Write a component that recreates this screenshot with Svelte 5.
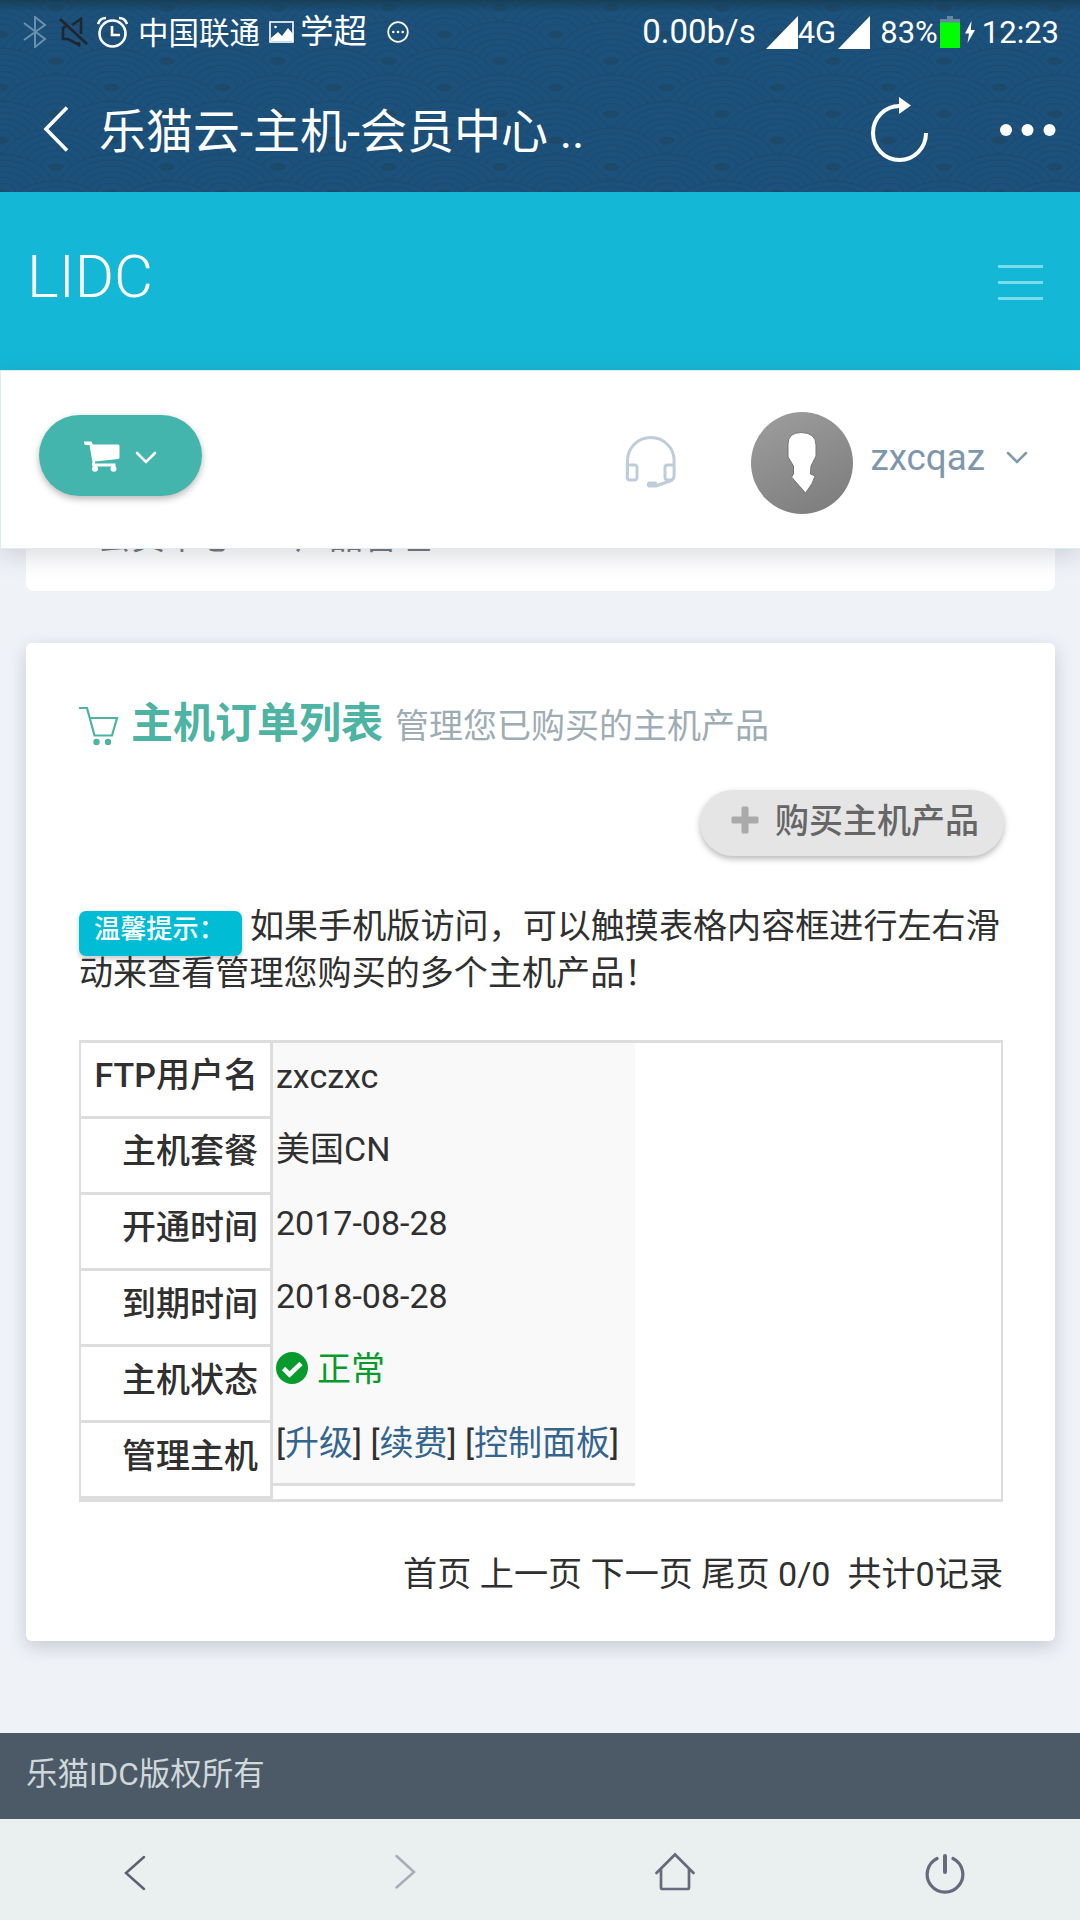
<script>
  const rows = [
    { label: 'FTP用户名', value: 'zxczxc', kind: 'text' },
    { label: '主机套餐', value: '美国CN', kind: 'text' },
    { label: '开通时间', value: '2017-08-28', kind: 'text' },
    { label: '到期时间', value: '2018-08-28', kind: 'text' },
    { label: '主机状态', value: '正常', kind: 'status' },
    { label: '管理主机', links: ['升级', '续费', '控制面板'], kind: 'links' }
  ];
  // Radii of the concentric arcs in one wave fan
  const rings = [48, 40, 32, 24, 16];
  // Fan centres inside one tile, back to front
  const fans = [
    [0, 10], [111, 10], [55.5, 36.5], [0, 63], [111, 63], [55.5, 89.5], [0, 116], [111, 116]
  ];
</script>

<div class="screen">
  <header class="top">
    <svg class="waves" width="1080" height="192" aria-hidden="true">
      <defs>
        <pattern id="waves" width="111" height="53" patternUnits="userSpaceOnUse" x="56" y="-1">
          {#each fans as [x, y]}
            <ellipse cx={x} cy={y} rx="56" ry="40" fill="#1c517b" stroke="#1b4b72" stroke-width="1.4" />
            {#each rings as r}
              <ellipse cx={x} cy={y} rx={r} ry={r * 0.72} fill="none" stroke="#1b4c73" stroke-width="1.6" />
            {/each}
            <ellipse cx={x} cy={y - 1} rx="8" ry="4" fill="#1d4a6b" />
          {/each}
        </pattern>
        <linearGradient id="shade" x1="0" y1="0" x2="0" y2="1">
          <stop offset="0" stop-color="#163a50" stop-opacity=".8" />
          <stop offset=".06" stop-color="#163a50" stop-opacity="0" />
        </linearGradient>
      </defs>
      <rect width="1080" height="192" fill="url(#waves)" />
      <rect width="1080" height="192" fill="url(#shade)" />
    </svg>

    <div class="status">
      <svg class="bt" width="24" height="32" viewBox="0 0 24 32"><path d="M1 7l21 16-10 8V1l10 8L1 24" fill="none" stroke="#6a90ae" stroke-width="2" /></svg>
      <svg class="mute" width="29" height="30" viewBox="0 0 29 30"><path d="M1 2l27 25M13 8l9-6v15M4 10v12h5l11 6v-3M4 10h3" fill="none" stroke="#20262b" stroke-width="2.6" /></svg>
      <svg class="alarm" width="31" height="32" viewBox="0 0 31 32"><g fill="none" stroke="#fff" stroke-width="2.6"><circle cx="15.500" cy="17.500" r="13" /><path d="M15 10v9h8" /><path d="M1 8q2-6 8-6M22 2q6 0 8 6" /></g></svg>
      <span class="carrier">中国联通</span>
      <svg class="pic" width="25" height="22" viewBox="0 0 25 22"><rect x="1" y="1" width="23" height="20" fill="none" stroke="#fff" stroke-width="1.600" /><path d="M2 20v-3l7-6 4 4 6-8 5 6v7z" fill="#fff" /><circle cx="6.500" cy="6" r="1.300" fill="#fff" /></svg>
      <span class="net">学超</span>
      <svg class="bubble" width="22" height="22" viewBox="0 0 22 22"><circle cx="11" cy="11" r="9.800" fill="none" stroke="#fff" stroke-width="1.700" /><g fill="#fff"><circle cx="6.300" cy="11" r="1.300" /><circle cx="11" cy="11" r="1.300" /><circle cx="15.700" cy="11" r="1.300" /></g></svg>
      <div class="right">
        <span class="speed">0.00b/s</span>
        <svg class="sig1" width="32" height="33" viewBox="0 0 32 33"><path d="M32 0v33H0z" fill="#fff" /></svg>
        <span class="g4">4G</span>
        <svg class="sig2" width="32" height="33" viewBox="0 0 32 33"><path d="M32 0v33H0z" fill="#fff" /></svg>
        <span class="pct">83%</span>
        <svg class="bat" width="20" height="32" viewBox="0 0 20 32"><path d="M7 0h6v3h7v4H0V3h7z" fill="#67869f" /><path d="M0 6.500h20V32H0z" fill="#0f0" /></svg>
        <svg class="bolt" width="10" height="22" viewBox="0 0 10 22"><path d="M6.500 0L0 12.500h4L2.500 22 10 9H5.800z" fill="#fff" /></svg>
        <span class="time">12:23</span>
      </div>
    </div>

    <div class="titlebar">
      <svg class="back" width="26" height="46" viewBox="0 0 26 46"><path d="M24 1.500L3 23l21 21.500" fill="none" stroke="#fff" stroke-width="3.600" /></svg>
      <h1>乐猫云-主机-会员中心 ..</h1>
      <svg class="reload" width="60" height="66" viewBox="0 0 60 66"><path d="M56 36A26.500 27 0 1 1 29.500 9" fill="none" stroke="#fff" stroke-width="4" /><path d="M29 0l12 8.500L29 17z" fill="#fff" /></svg>
      <svg class="dots" width="56" height="12" viewBox="0 0 56 12"><g fill="#fff"><circle cx="6" cy="6" r="6" /><circle cx="27.500" cy="6" r="6" /><circle cx="49.500" cy="6" r="6" /></g></svg>
    </div>
  </header>

  <div class="brandbar">
    <span class="brand">LIDC</span>
    <span class="menu"><i></i><i></i><i></i></span>
  </div>

  <div class="userbar">
    <button class="cart" aria-label="cart">
      <svg width="36" height="31" viewBox="0 0 36 31"><path d="M0 0.500h7.500l1.300 3H34q1.500 0 1.500 1.500v11.500q0 1.300-1.300 1.500L11 20.500v2h20.500v3H9q-2-1-.5-4L5.500 4H1Q-.3 2 0 .5z" fill="#fff" /><circle cx="11" cy="27.800" r="3" fill="#fff" /><circle cx="29.500" cy="27.800" r="3" fill="#fff" /></svg>
      <svg class="chev" width="22" height="14" viewBox="0 0 22 14"><path d="M2 2l9 9 9-9" fill="none" stroke="#fff" stroke-width="2.600" stroke-linecap="round" /></svg>
    </button>
    <svg class="headset" width="52" height="52" viewBox="0 0 52 52"><g fill="none" stroke="#bfcddb" stroke-width="3"><path d="M2.500 38V24.500a23.300 23 0 0 1 46.600 0V39q0 4.500-4 6L31 50h-7q-1.500-1.500 0-3h6.500" stroke-linecap="round" /><path d="M2 29h7.500q2.500 0 2.500 2.500V41q0 3-3 3H5q-2.700 0-2.700-3V28" /><path d="M50 29h-7.500q-2.500 0-2.500 2.500V41q0 3 3 3h4" /></g></svg>
    <svg class="avatar" width="102" height="102" viewBox="0 0 102 102">
      <defs>
        <linearGradient id="av" x1=".2" y1="0" x2=".7" y2="1"><stop offset="0" stop-color="#9c9c9c" /><stop offset="1" stop-color="#7e7e7e" /></linearGradient>
      </defs>
      <circle cx="51" cy="51" r="51" fill="url(#av)" />
      <path d="M37 32q0-11.500 13.500-11.500Q65 21 65 33v11l-5 10-.5 8 4.500 2-3 7.500L54.500 81 40.500 65l2-3v-8L37 45z" fill="#fff" stroke="#757575" stroke-width="1" />
    </svg>
    <span class="user">zxcqaz</span>
    <svg class="caret" width="22" height="14" viewBox="0 0 22 14"><path d="M2 2l9 9 9-9" fill="none" stroke="#7f99ae" stroke-width="2.500" stroke-linecap="round" /></svg>
  </div>

  <main>
    <nav class="crumbs"><span>会员中心</span><span>产品管理</span></nav>

    <section class="card">
      <div class="heading">
        <svg width="40" height="40" viewBox="0 0 40 40"><path d="M0 2h8l7.500 27.500H33L38 12H11" fill="none" stroke="#4db3a2" stroke-width="2.200" /><circle cx="17.500" cy="36" r="3.200" fill="#4db3a2" /><circle cx="29" cy="36" r="3.200" fill="#4db3a2" /></svg>
        <h2>主机订单列表</h2>
        <small>管理您已购买的主机产品</small>
      </div>

      <div class="actions">
        <button class="buy">
          <svg width="28" height="28" viewBox="0 0 28 28"><path d="M12 .5h4q1.500 0 1.500 1.500v8.500H26q1.500 0 1.500 1.500v4q0 1.500-1.500 1.500h-8.500V26q0 1.500-1.500 1.500h-4q-1.500 0-1.500-1.500v-8.500H2Q.5 17.500.5 16v-4q0-1.500 1.500-1.500h8.500V2q0-1.500 1.500-1.500z" fill="#aaa" /></svg>
          <span>购买主机产品</span>
        </button>
      </div>

      <p class="tip"><span class="badge">温馨提示：</span><span class="msg">如果手机版访问，可以触摸表格内容框进行左右滑动来查看管理您购买的多个主机产品！</span></p>

      <div class="table">
        <div class="keys">
          {#each rows as row}
            <div class="key">{row.label}</div>
          {/each}
        </div>
        <div class="vals">
          {#each rows as row}
            <div class="val">
              {#if row.kind === 'status'}
                <span class="ok"><svg width="32" height="32" viewBox="0 0 32 32"><circle cx="16" cy="16" r="16" fill="#089a2d" /><path d="M7.500 16.500l6 6L25 11.500" fill="none" stroke="#f9f9f9" stroke-width="4.600" /></svg>{row.value}</span>
              {:else if row.kind === 'links'}
                {#each row.links as link}<span class="link">[<a href="#top">{link}</a>]</span>{/each}
              {:else}
                {row.value}
              {/if}
            </div>
          {/each}
        </div>
      </div>

      <div class="pager">首页 上一页 下一页 尾页 0/0&nbsp; 共计0记录</div>
    </section>
  </main>

  <footer>乐猫IDC版权所有</footer>

  <nav class="bottom">
    <span><svg width="40" height="40" viewBox="0 0 40 40"><path d="M29 5L11 21l18 16" fill="none" stroke="#5d6073" stroke-width="2.500" stroke-linecap="round" /></svg></span>
    <span><svg width="40" height="40" viewBox="0 0 40 40"><path d="M11.500 4L29 20l-17.500 15.500" fill="none" stroke="#a9abb6" stroke-width="2.500" stroke-linecap="round" /></svg></span>
    <span><svg width="40" height="40" viewBox="0 0 40 40"><path d="M1.500 21L20 2.500 38.500 21M6 17.500v18q0 1.500 1.500 1.500h25q1.500 0 1.500-1.500v-18" fill="none" stroke="#656a7d" stroke-width="2.700" stroke-linecap="round" /></svg></span>
    <span><svg class="power" width="40" height="42" viewBox="0 0 40 42"><path d="M12 6.500a17.800 17.800 0 1 0 16 0" fill="none" stroke="#656a7d" stroke-width="3.200" stroke-linecap="round" /><path d="M20 4v16" stroke="#656a7d" stroke-width="4" stroke-linecap="round" /></svg></span>
  </nav>
</div>

<style>
  :global(body) { background: #eff2f7; }
  .screen {
    width: 1080px;
    height: 1920px;
    display: flex;
    flex-direction: column;
    overflow: hidden;
    background: #eff2f7;
    color: #303030;
    font-family: Roboto, "Noto Sans CJK SC", sans-serif;
    font-size: 34px;
  }
  svg { display: block; flex: none; }
  h1, h2, p { margin: 0; font-weight: 400; }
  button { border: 0; padding: 0; font: inherit; display: flex; align-items: center; }

  .top { position: relative; height: 192px; flex: none; color: #fff; background: #1c517b; }
  .waves { position: absolute; top: 0; left: 0; }
  .status { position: relative; height: 64px; display: flex; align-items: center; padding: 0 21px 0 23px; white-space: nowrap; }
  .mute { margin-left: 12px; }
  .alarm { margin-left: 9px; }
  .carrier { margin: 0 0 2px 10px; font-size: 30.500px; }
  .pic { margin-left: 9px; }
  .net { margin: 0 0 7px 6px; font-size: 33.500px; }
  .bubble { margin-left: 20px; }
  .right { flex: 1; display: flex; align-items: center; justify-content: flex-end; font-size: 31px; }
  .speed { font-size: 33px; margin: 0 10px 2px 0; }
  .g4 { margin-right: 2px; }
  .sig2 { margin-right: 10px; }
  .pct { margin-right: 2px; }
  .bolt { margin: 0 7px 0 5px; }
  .titlebar { position: relative; height: 128px; display: flex; align-items: center; padding: 0 24px 0 43px; }
  .back { margin-top: 2px; }
  .titlebar h1 { flex: 1; margin-left: 30px; font-size: 47px; line-height: 60px; padding-top: 7px; }
  .reload { margin: 4px 70px 0 0; }
  .dots { margin-top: 3px; }

  .brandbar { height: 178px; flex: none; background: #14b8d6; display: flex; align-items: center; justify-content: space-between; padding: 0 37px 0 27px; }
  .brand { font-size: 60px; font-weight: 300; line-height: 70px; padding-bottom: 9px; color: #fff; }
  .menu { display: flex; flex-direction: column; gap: 13px; padding-top: 3px; }
  .menu i { width: 45px; height: 3px; background: #75deed; }

  .userbar {
    position: relative;
    z-index: 2;
    box-sizing: border-box;
    height: 179px;
    flex: none;
    display: flex;
    align-items: center;
    padding: 0 52px 7px 38px;
    background: #fff;
    border: solid #d9eeee;
    border-width: 1px 0 1px 1px;
    box-shadow: 0 6px 24px rgba(60, 70, 90, .2);
  }
  .cart { width: 163px; height: 81px; border-radius: 41px; padding-left: 45px; margin-right: auto; margin-bottom: 2px; background: #43b5ad; box-shadow: 0 3px 7px rgba(0, 0, 0, .28); }
  .cart svg { margin-top: 3px; }
  .cart .chev { margin: 5px 0 0 15px; }
  .headset { margin: 12px 74px 0 0; }
  .avatar { margin: 14px 17px 0 0; }
  .user { font-size: 36.800px; line-height: 44px; margin-right: 21px; color: #7f97ac; padding-top: 4px; }
  .caret { margin-top: 4px; }

  main { flex: 1; padding: 0 25px 0 26px; }
  .crumbs { height: 42px; overflow: hidden; display: flex; gap: 62px; padding-left: 71px; border-radius: 0 0 8px 8px; background: #fff; color: #777; line-height: 40px; }
  .crumbs span { margin-top: -32px; height: 40px; }

  .card { box-sizing: border-box; height: 998px; margin-top: 52px; padding: 56px 52px 0 53px; border-radius: 6px; background: #fff; box-shadow: 0 6px 18px rgba(70, 80, 100, .24); }
  .heading { height: 50px; display: flex; align-items: center; white-space: nowrap; }
  .heading svg { margin-top: 4px; }
  h2 { margin: 0 12px 0 12px; font-size: 42px; line-height: 50px; font-weight: 700; color: #4db3a2; }
  small { font-size: 34px; line-height: 50px; color: #9eacb4; padding-top: 4px; }
  .actions { display: flex; justify-content: flex-end; margin-top: 41px; }
  .buy { width: 304px; height: 66px; margin-right: -1px; border-radius: 33px; background: #e5e5e5; color: #666; font-size: 34px; font-weight: 500; box-shadow: 0 3px 6px rgba(0, 0, 0, .28); padding-left: 31px; }
  .buy svg { margin: 0 16px 7px 0; }
  .buy span { line-height: 40px; margin-bottom: 4px; }

  .tip { margin-top: 47px; line-height: 47px; height: 94px; position: relative; }
  .badge { display: inline-block; vertical-align: top; box-sizing: border-box; width: 163px; height: 45px; margin: 8px 8px -8px 0; padding-left: 15px; border-radius: 7px; background: #00bcd4; color: #fff; font-size: 26.200px; font-weight: 500; line-height: 36px; white-space: nowrap; box-shadow: 0 3px 5px rgba(0, 0, 0, .2); }
  .msg { position: relative; font-size: 34.080px; }

  .table { box-sizing: border-box; height: 462px; margin-top: 43px; display: flex; align-items: flex-start; border: solid #ddd; border-width: 3px 2px; }
  .keys { width: 189px; box-sizing: content-box; border-right: 3px solid #ddd; }
  .key { box-sizing: border-box; height: 76px; border-bottom: 3px solid #ddd; padding: 8px 12px 0 0; line-height: 48px; text-align: right; font-weight: 500; }
  .key:nth-child(n + 4) { padding-top: 9px; }
  .vals { width: 362px; height: 440px; border-bottom: 3px solid #ddd; background: #f9f9f9; display: grid; grid-template-rows: repeat(6, 1fr); }
  .val { display: flex; gap: 8.500px; padding: 9px 0 0 3px; line-height: 48px; white-space: nowrap; }
  .ok { display: flex; color: #089a2d; }
  .ok svg { margin: 7px 9px 0 0; }
  .link a { color: #34658f; text-decoration: none; }

  .pager { margin-top: 48px; line-height: 48px; text-align: right; white-space: nowrap; font-size: 34.120px; }

  footer { box-sizing: border-box; height: 86px; flex: none; padding: 21px 26px; background: #4b5a66; color: #d0d8dc; font-size: 31.500px; line-height: 42px; }
  .bottom { height: 101px; flex: none; display: grid; grid-template-columns: repeat(4, 1fr); background: #eaf0f0; }
  .bottom span { display: flex; justify-content: center; padding-top: 33px; }
</style>
